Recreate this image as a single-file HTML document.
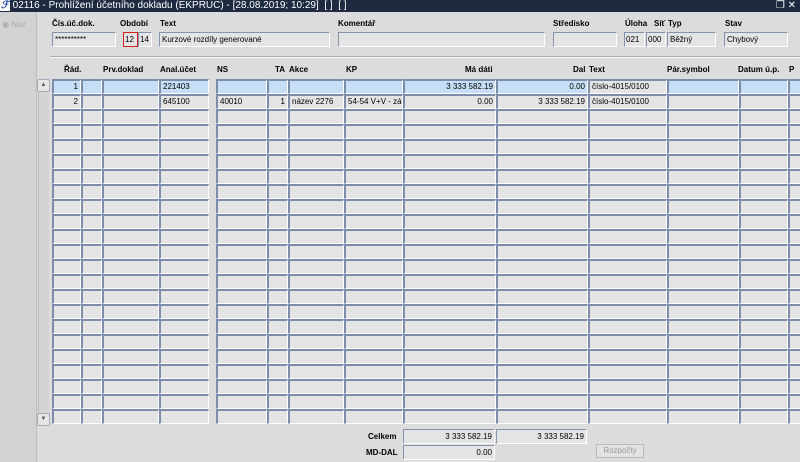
<!DOCTYPE html><html><head><meta charset="utf-8"><style>
body{margin:0;width:800px;height:462px;overflow:hidden;background:#dcdcdc;font-family:"Liberation Sans",sans-serif;font-size:8px;color:#000;position:relative}
.a{position:absolute}
.tb{left:0;top:0;width:800px;height:12px;background:#1e2a40;color:#fff;font-size:10px;line-height:12px}
.side{left:0;top:12px;width:36px;height:450px;background:#d2d2d2;border-right:1px solid #bdbdbd}
.lb{font-weight:bold;font-size:8px}
.f{box-sizing:border-box;background:#e4e4e4;border-top:1px solid #8494ac;border-left:1px solid #8494ac;border-bottom:1px solid #fff;border-right:1px solid #fff;height:15px;line-height:13px;padding:0 2px;white-space:nowrap;overflow:hidden}
.c{box-sizing:border-box;background:#e4e4e4;border-top:2px solid #7c8cab;border-left:2px solid #7c8cab;border-bottom:1px solid #fff;border-right:1px solid #fff;height:15px;line-height:12px;padding:0 2px;white-space:nowrap;overflow:hidden}
.r{text-align:right}
.blue{background:#c6def6}
</style></head><body>
<div class="a tb"><span style="background:#fff;color:#1a3fa0;font-weight:bold;font-style:italic;padding:0 1px">ℱ</span> 02116 - Prohlížení účetního dokladu (EKPRUC) - [28.08.2019; 10:29]&nbsp; [ ]&nbsp; [ ]<span style="position:absolute;right:4px;top:0">❐ ✕</span></div>
<div class="a side"><span style="position:absolute;left:2px;top:8px;color:#aaa;font-size:8px">◉ Nav</span></div>
<div class="a lb" style="left:52px;top:19px">Čís.úč.dok.</div>
<div class="a lb" style="left:120px;top:19px">Období</div>
<div class="a lb" style="left:160px;top:19px">Text</div>
<div class="a lb" style="left:338px;top:19px">Komentář</div>
<div class="a lb" style="left:553px;top:19px">Středisko</div>
<div class="a lb" style="left:625px;top:19px">Úloha</div>
<div class="a lb" style="left:654px;top:19px">Síť</div>
<div class="a lb" style="left:668px;top:19px">Typ</div>
<div class="a lb" style="left:725px;top:19px">Stav</div>
<div class="a f" style="left:52px;top:32px;width:64px">**********</div>
<div class="a f" style="left:123px;top:32px;width:15px;border:1px solid #d02020;padding:0 1px">12</div>
<div class="a f" style="left:138px;top:32px;width:14px;padding:0 1px">14</div>
<div class="a f" style="left:159px;top:32px;width:171px">Kurzové rozdíly generované</div>
<div class="a f" style="left:338px;top:32px;width:207px"></div>
<div class="a f" style="left:553px;top:32px;width:64px"></div>
<div class="a f" style="left:624px;top:32px;width:21px;padding:0 1px">021</div>
<div class="a f" style="left:646px;top:32px;width:20px;padding:0 1px">000</div>
<div class="a f" style="left:667px;top:32px;width:49px">Běžný</div>
<div class="a f" style="left:724px;top:32px;width:64px">Chybový</div>
<div class="a" style="left:50px;top:56px;width:750px;height:1px;background:#aaa;border-bottom:1px solid #fff"></div>
<div class="a" style="left:38px;top:79px;width:10px;height:346px;background:#d4d4d4;border-left:1px solid #bbb"></div>
<div class="a" style="left:37px;top:79px;width:11px;height:11px;background:#e6e6e6;border:1px solid #aab;border-radius:2px;font-size:6px;text-align:center;color:#456;line-height:11px">▲</div>
<div class="a" style="left:37px;top:413px;width:11px;height:11px;background:#e6e6e6;border:1px solid #aab;border-radius:2px;font-size:6px;text-align:center;color:#456;line-height:11px">▼</div>
<div id="g"></div>
<div class="a lb" style="left:368px;top:432px">Celkem</div>
<div class="a lb" style="left:366px;top:448px">MD-DAL</div>
<div class="a f r" style="left:403px;top:429px;width:92px">3 333 582.19</div>
<div class="a f r" style="left:496px;top:429px;width:91px">3 333 582.19</div>
<div class="a f r" style="left:403px;top:445px;width:92px">0.00</div>
<div class="a" style="left:596px;top:444px;width:48px;height:14px;box-sizing:border-box;border:1px solid #bbb;background:#e2e2e2;color:#999;text-align:center;line-height:12px">Rozpočty</div>
<script>
var cols=[[52,29,'Řád.','r'],[81,21,'',''],[102,57,'Prv.doklad',''],[159,50,'Anal.účet',''],[216,51,'NS',''],[267,21,'TA','r'],[288,56,'Akce',''],[344,59,'KP',''],[403,93,'Má dáti','r'],[496,92,'Dal','r'],[588,79,'Text',''],[667,72,'Pár.symbol',''],[739,49,'Datum ú.p.',''],[788,14,'P','']];
var hdr={0:[64,'Řád.'],2:[103,'Prv.doklad'],3:[160,'Anal.účet'],4:[217,'NS'],5:[275,'TA'],6:[289,'Akce'],7:[346,'KP'],10:[589,'Text'],11:[667,'Pár.symbol'],12:[738,'Datum ú.p.'],13:[789,'P']};
var data=[['1','','','221403','','','','','3 333 582.19','0.00','číslo-4015/0100','',''],['2','','','645100','40010','1','název 2276','54-54 V+V - zá','0.00','3 333 582.19','číslo-4015/0100','','']];
var h='';
for(var k in hdr)h+='<div class="a lb" style="left:'+hdr[k][0]+'px;top:65px">'+hdr[k][1]+'</div>';
h+='<div class="a lb" style="left:465px;top:65px">Má dáti</div><div class="a lb" style="left:573px;top:65px">Dal</div>';
for(var r=0;r<23;r++){for(var c=0;c<cols.length;c++){var t=data[r]?(data[r][c]||''):'';var cl='a c'+(cols[c][3]?' r':'')+(r==0&&c!=10?' blue':'');
h+='<div class="'+cl+'" style="left:'+cols[c][0]+'px;top:'+(79+r*15)+'px;width:'+cols[c][1]+'px">'+t+'</div>';}}
document.getElementById('g').innerHTML=h;
</script>
</body></html>
